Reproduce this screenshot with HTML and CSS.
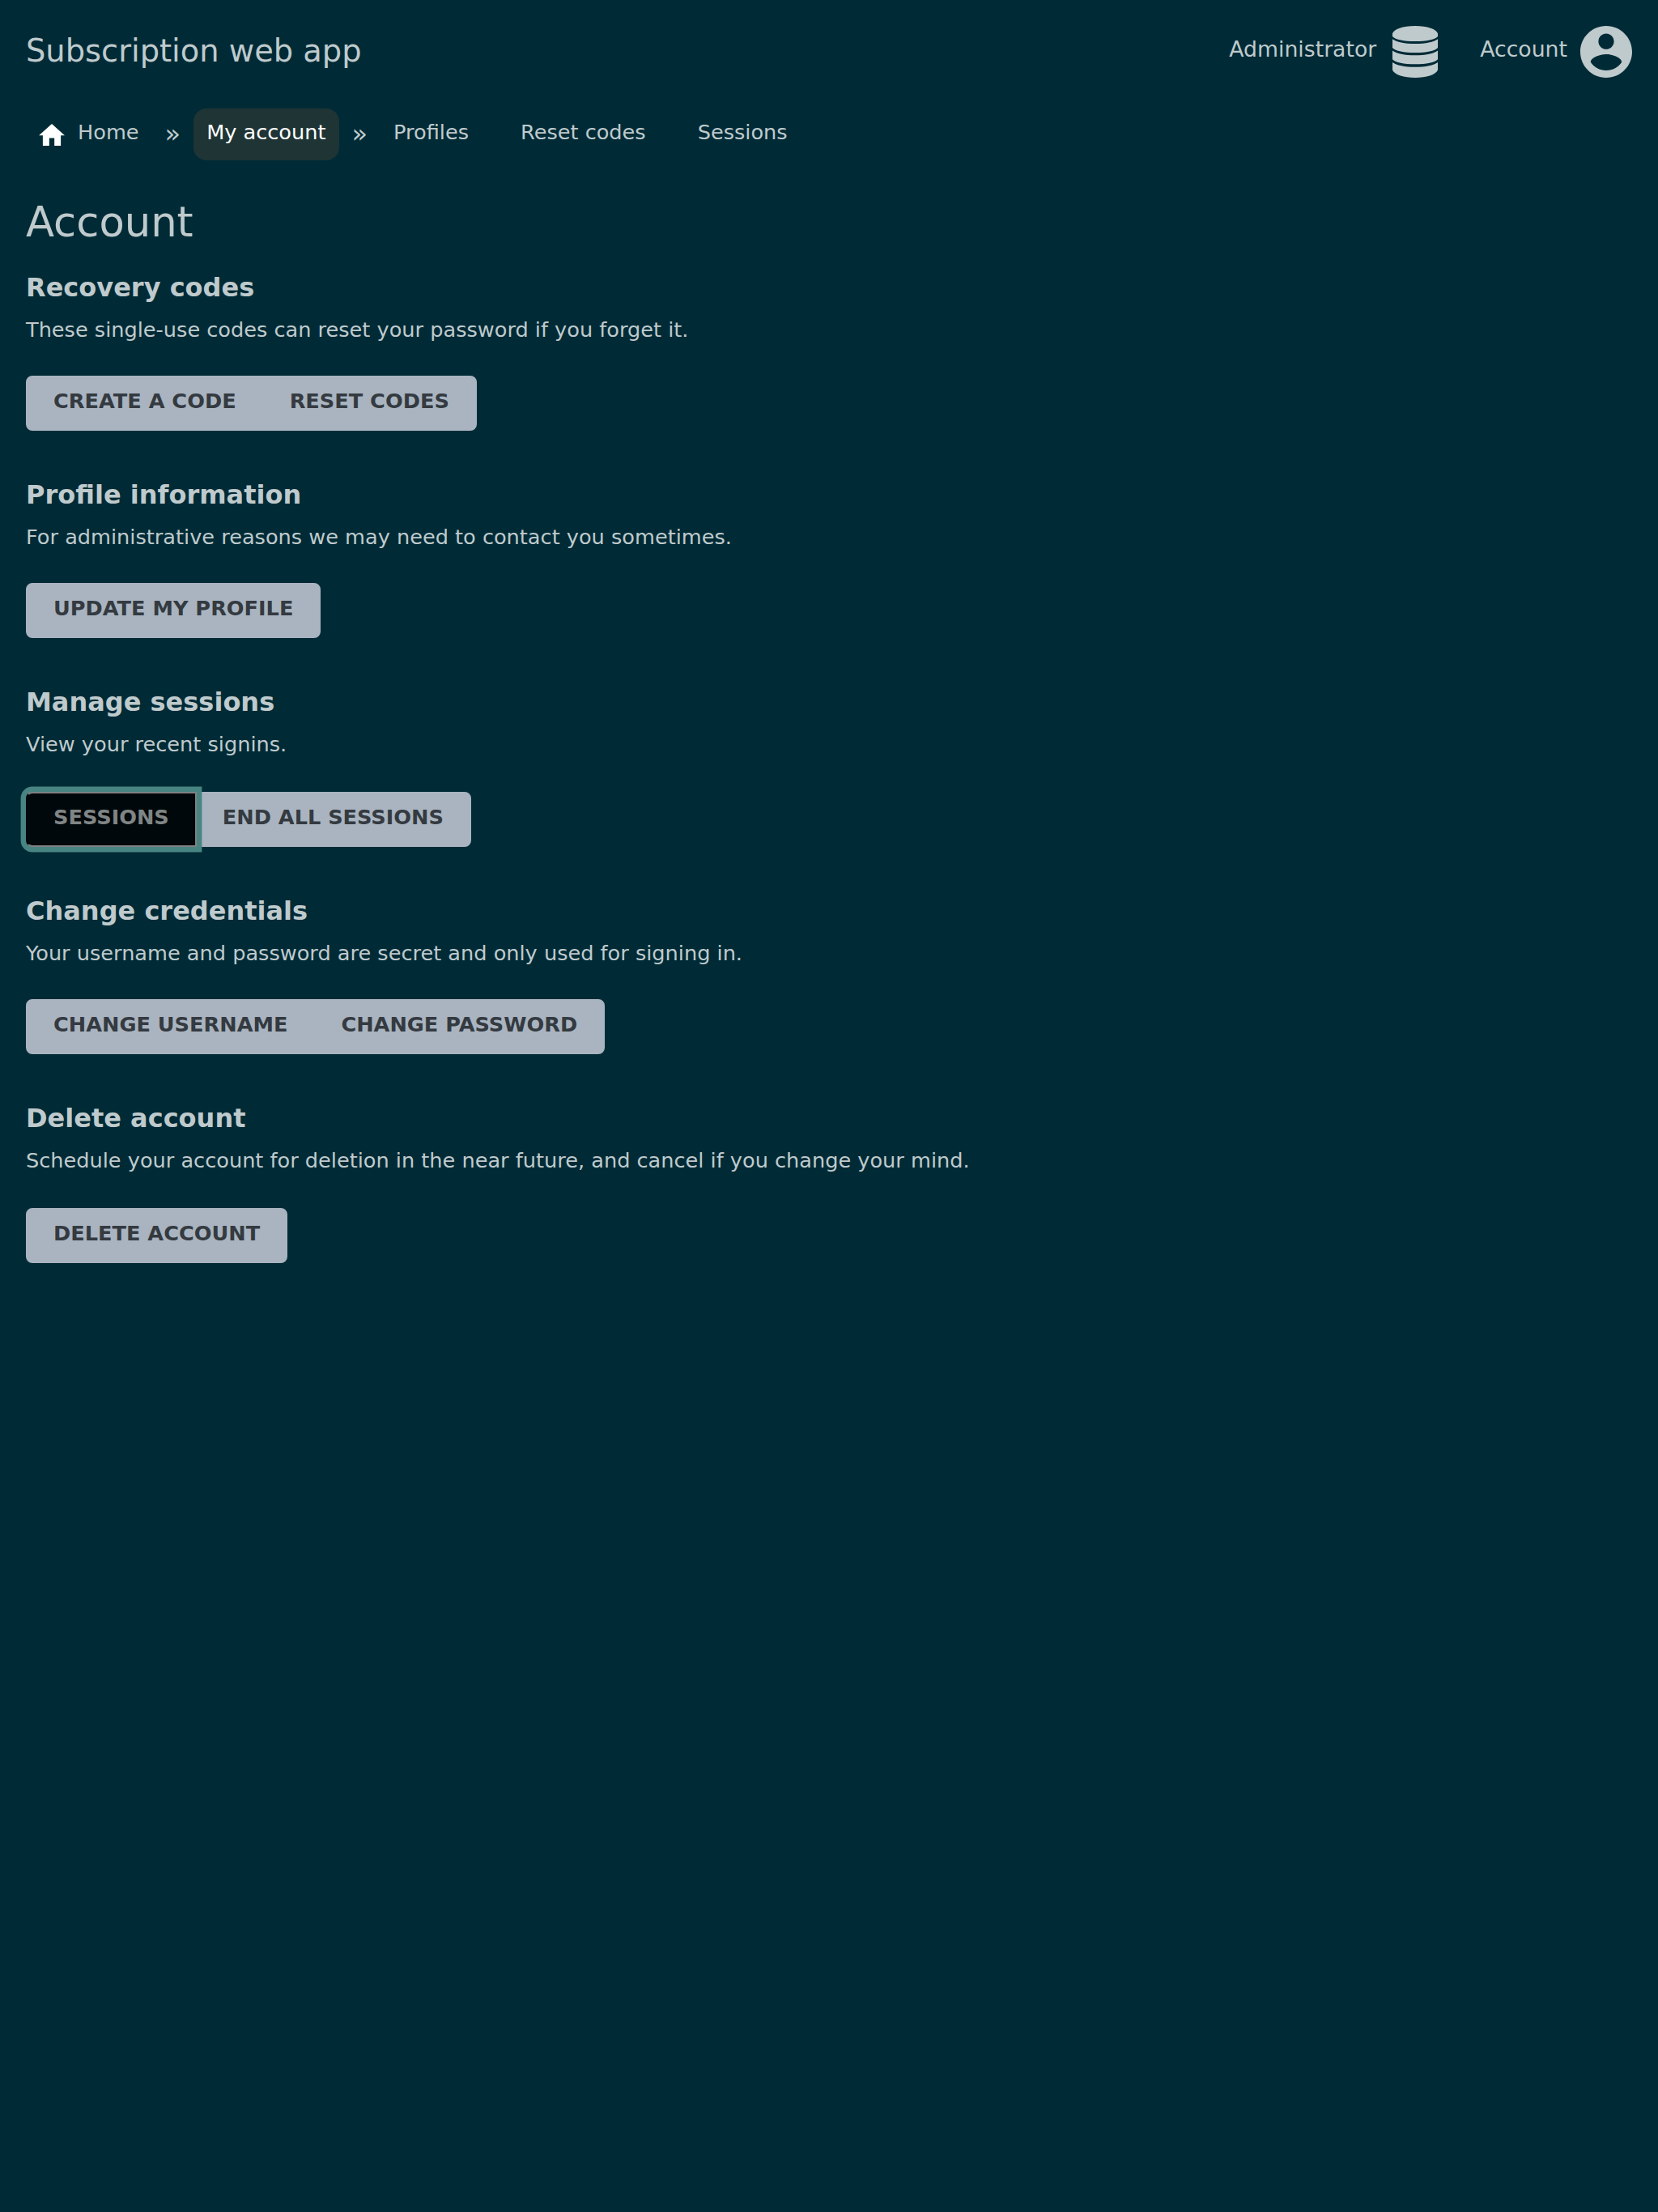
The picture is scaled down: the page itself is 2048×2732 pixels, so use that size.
FILE: index.html
```html
<!DOCTYPE html>
<html lang="en">
<head>
<meta charset="utf-8">
<title>Account</title>
<link rel="stylesheet" href="styles.css">
</head>
<body>
<header class="header">
  <a class="brand">Subscription web app</a>
  <nav class="user-menu">
    <a class="user-link"><span>Administrator</span>
      <svg class="user-icon" viewBox="-4 0 64 64"><path d="M0 9.500C1.500 4 13 0 28 0s26.500 4 28 9.500V13c-4 4-14 6-28 6S4 17 0 13z"/><path d="M0 16.200C5 20 15 22 28 22s23-2 28-5.800V27c-4 4-14 6-28 6S4 31 0 27z"/><path d="M0 30.500c5 3.800 15 5.800 28 5.800s23-2 28-5.800v10.700c-4 4-14 6-28 6s-24-2-28-6z"/><path d="M0 44.900c5 3.800 15 5.800 28 5.800s23-2 28-5.800v9.600C53 60.500 42 64 28 64S3 60.500 0 54.500z"/></svg>
    </a>
    <a class="user-link"><span>Account</span>
      <svg class="user-icon" viewBox="2 2 20 20"><path d="M12 2C6.480 2 2 6.480 2 12s4.480 10 10 10 10-4.480 10-10S17.520 2 12 2zm0 3c1.660 0 3 1.340 3 3s-1.340 3-3 3-3-1.340-3-3 1.340-3 3-3zm0 14.200c-2.500 0-4.710-1.280-6-3.220.030-1.990 4-3.080 6-3.080 1.990 0 5.970 1.090 6 3.080-1.290 1.940-3.500 3.220-6 3.220z"/></svg>
    </a>
  </nav>
</header>
<nav class="breadcrumb">
  <a class="crumb"><svg class="home-icon" viewBox="2 3 20 17"><path d="M10 20v-6h4v6h5v-8h3L12 3 2 12h3v8z"/></svg>Home</a>
  <span class="divider">»</span>
  <a class="crumb crumb-active">My account</a>
  <span class="divider">»</span>
  <a class="crumb">Profiles</a>
  <a class="crumb crumb-sibling">Reset codes</a>
  <a class="crumb crumb-sibling">Sessions</a>
</nav>
<main class="content">
  <h1>Account</h1>
  <section><h2>Recovery codes</h2><p>These single-use codes can reset your password if you forget it.</p>
    <div class="buttons"><a class="button">Create a code</a><a class="button">Reset codes</a></div></section>
  <section><h2>Profile information</h2><p>For administrative reasons we may need to contact you sometimes.</p>
    <div class="buttons"><a class="button">Update my profile</a></div></section>
  <section class="roomy"><h2>Manage sessions</h2><p>View your recent signins.</p>
    <div class="buttons"><a class="button button-focus">Sessions</a><a class="button">End all sessions</a></div></section>
  <section><h2>Change credentials</h2><p>Your username and password are secret and only used for signing in.</p>
    <div class="buttons"><a class="button">Change username</a><a class="button">Change password</a></div></section>
  <section class="roomy"><h2>Delete account</h2><p>Schedule your account for deletion in the near future, and cancel if you change your mind.</p>
    <div class="buttons"><a class="button">Delete account</a></div></section>
</main>
</body>
</html>
```
FILE: styles.css
```css
* { box-sizing: border-box; }
body {
  margin: 0;
  min-height: 100vh;
  background: #002b36;
  color: #bfcacd;
  font: 25.6px/38px "DejaVu Sans", sans-serif;
}
.header {
  display: flex;
  justify-content: space-between;
  height: 134px;
  padding: 32px 32px 0;
}
.brand { font-size: 38.4px; line-height: 61px; }
.user-menu { display: flex; gap: 48px; font-size: 26.7px; }
.user-link { display: flex; gap: 16px; line-height: 57px; }
.user-icon { width: 64px; height: 64px; fill: currentColor; }
.breadcrumb { display: flex; height: 64px; padding-left: 32px; }
.crumb {
  display: flex;
  padding: 0 16px;
  border-radius: 16px;
  line-height: 58px;
}
.crumb-active { background: #1f3435; color: #fff; }
.crumb-sibling { margin-left: 32px; }
.home-icon { width: 32px; height: 27px; margin: 19px 16px 0 0; fill: #fff; }
.divider { padding: 0 16px; font-size: 32px; line-height: 62px; }
.content { padding: 40px 32px 0; }
h1 { margin: 0; font-size: 51.2px; font-weight: 400; line-height: 72px; }
h2 { margin: 0; padding-top: 22px; font-size: 32px; line-height: 46px; }
p { margin: 0; padding-top: 10px; }
section { height: 256px; }
.buttons { display: flex; margin-top: 38px; }
.roomy { height: 258px; }
.roomy .buttons { margin-top: 40px; }
.button {
  height: 68px;
  padding: 0 32px;
  border: 2px solid #a9b4c0;
  background: #a9b4c0;
  color: #343a40;
  font-weight: 700;
  line-height: 58px;
  text-transform: uppercase;
}
.button + .button { margin-left: -2px; }
.button:first-child { border-radius: 8px 0 0 8px; }
.button:last-child { border-radius: 0 8px 8px 0; }
.button:only-child { border-radius: 8px; }
.button-focus {
  position: relative;
  z-index: 1;
  border-color: #808080;
  border-left-color: #00080b;
  background: #00080b;
  color: #808585;
  box-shadow: 0 0 0 6.4px #488582;
}
```
